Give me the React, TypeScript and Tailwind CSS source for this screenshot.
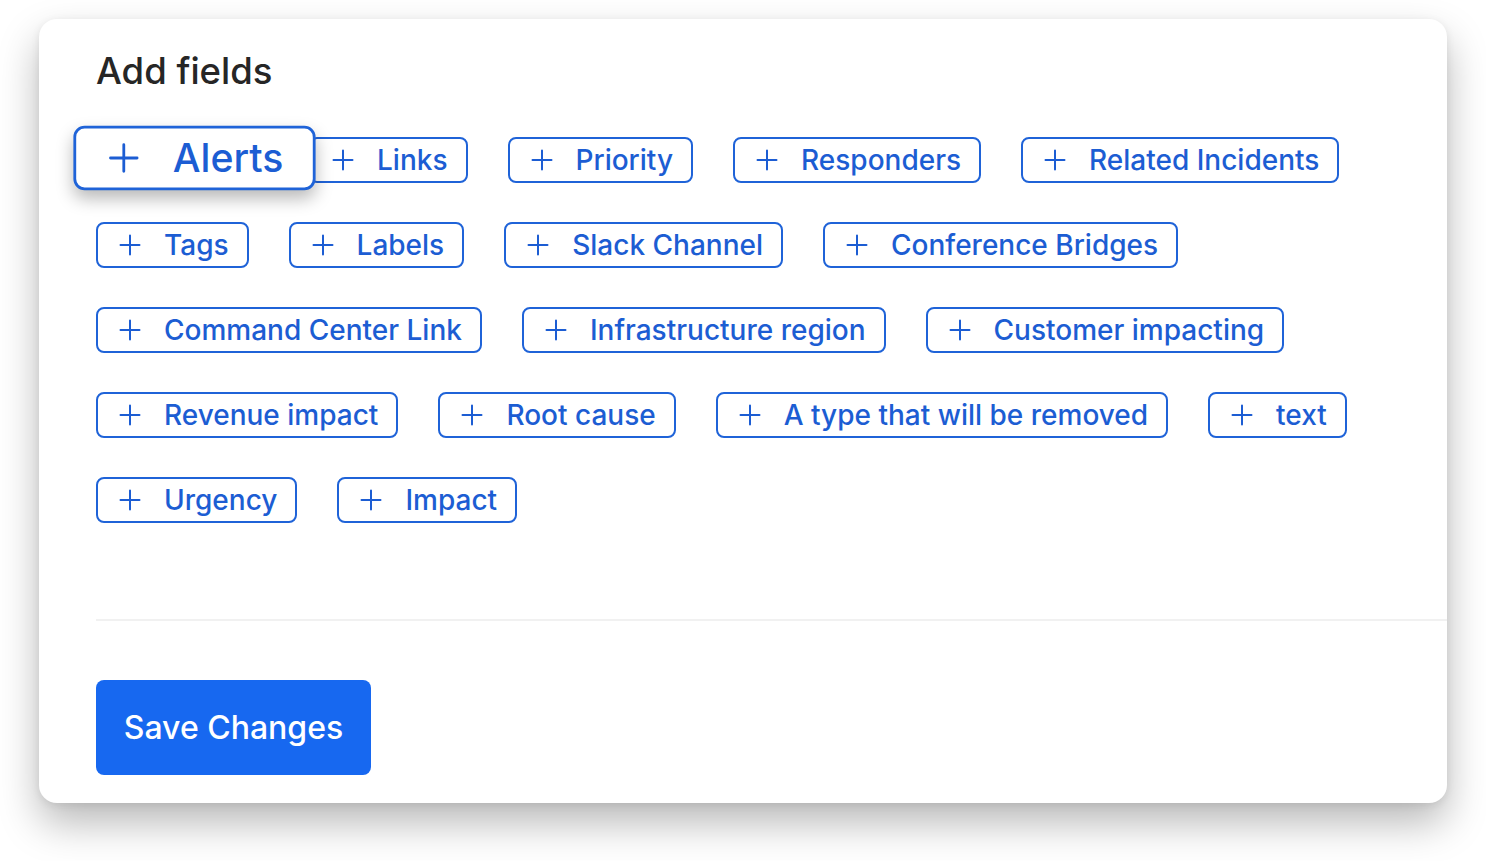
import React from "react";

const Plus = ({ size = 22 }: { size?: number }) => (
  <svg width={size} height={size} viewBox="0 0 22 22" fill="none" className="shrink-0">
    <path d="M11 1.5V20.5M1.5 11H20.5" stroke="currentColor" strokeWidth="2" strokeLinecap="round" />
  </svg>
);

function Chip({ label, dragged = false }: { label: string; dragged?: boolean }) {
  return (
    <div
      className={
        dragged
          ? "relative z-10 flex h-[46px] shrink-0 items-center gap-[24px] rounded-[8px] border-2 border-[#1f63d8] bg-white pl-[23px] pr-[21px] text-[#1c5dd3] shadow-[0_6px_12px_rgba(0,0,0,0.28)] scale-[1.4] translate-x-[12px] -translate-y-[2px]"
          : "flex h-[46px] shrink-0 items-center gap-[23px] rounded-[8px] border-2 border-[#1f63d8] bg-white pl-[21px] pr-[18px] text-[#1c5dd3]"
      }
    >
      <Plus />
      <span className="whitespace-nowrap text-[28px] leading-none font-medium">{label}</span>
    </div>
  );
}

const rows: string[][] = [
  ["Alerts", "Links", "Priority", "Responders", "Related Incidents"],
  ["Tags", "Labels", "Slack Channel", "Conference Bridges"],
  ["Command Center Link", "Infrastructure region", "Customer impacting"],
  ["Revenue impact", "Root cause", "A type that will be removed", "text"],
  ["Urgency", "Impact"],
];

export default function App() {
  return (
    <div
      className="min-h-[861px] w-full bg-white pl-[39px] pt-[19px]"
      style={{ fontFamily: "Inter, 'Noto Sans', sans-serif" }}
    >
      <div className="flex h-[784px] w-[1408px] flex-col rounded-[18px] bg-white pl-[57px] pt-[30px] shadow-[0_20px_40px_rgba(0,0,0,0.28),0_2px_8px_rgba(0,0,0,0.08)]">
        <h1 className="text-[36.5px] leading-[44px] font-medium text-[#262626]">Add fields</h1>
        <div className="mt-[44px] flex flex-col gap-[39px]">
          {rows.map((r, i) => (
            <div key={i} className="flex gap-[40px]">
              {r.map((l) => (
                <Chip key={l} label={l} dragged={l === "Alerts"} />
              ))}
            </div>
          ))}
        </div>
        <div className="mt-[96px] h-[2px] bg-[#f1f1f1]" />
        <button className="mt-[59px] flex h-[95px] w-[275px] items-center justify-center rounded-[8px] bg-[#1768f0] text-[32px] font-medium text-white">
          Save Changes
        </button>
      </div>
    </div>
  );
}
